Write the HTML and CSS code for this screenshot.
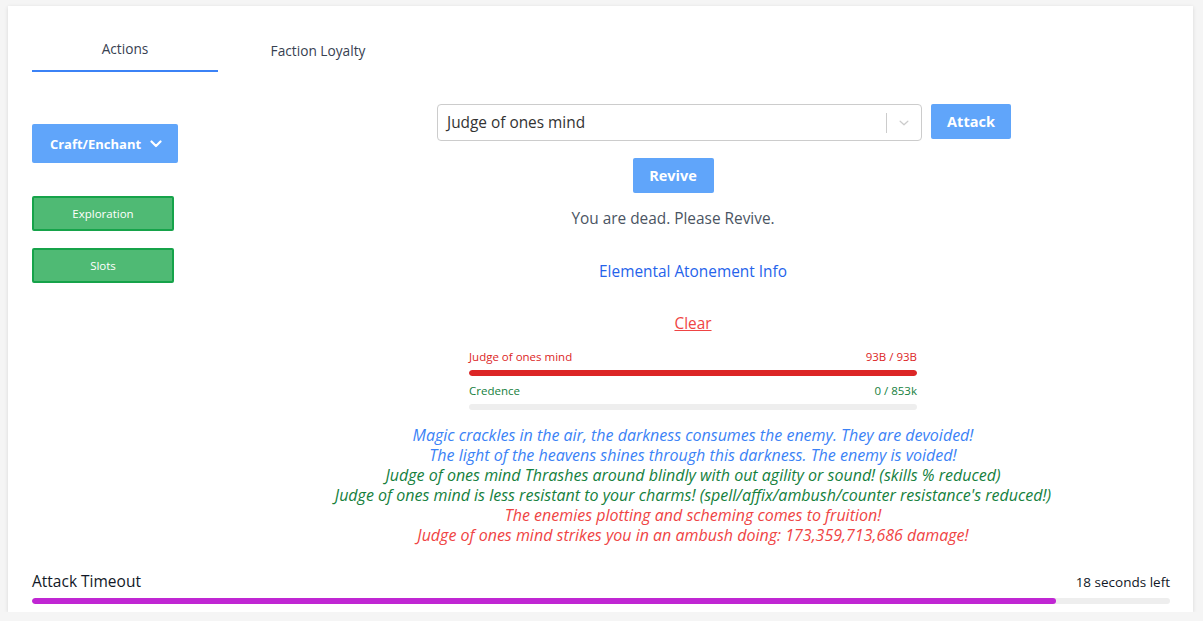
FILE: index.html
```html
<!DOCTYPE html>
<html>
<head>
<meta charset="utf-8">
<link rel="stylesheet" href="styles.css">
</head>
<body>
<div class="card">
  <div class="tabs">
    <div class="tab active">Actions</div>
    <div class="tab second">Faction Loyalty</div>
  </div>
  <div class="body">
    <div class="side">
      <button class="craft">Craft/Enchant
        <svg class="chev" width="12" height="8" viewBox="0 0 12 8"><path d="M1.5 1.5 L6 6 L10.5 1.5" fill="none" stroke="#fff" stroke-width="2.2" stroke-linecap="round" stroke-linejoin="round"/></svg>
      </button>
      <button class="green first">Exploration</button>
      <button class="green">Slots</button>
    </div>
    <div class="main">
      <div class="selrow">
        <div class="select">
          <span class="selval">Judge of ones mind</span>
          <span class="sep"></span>
          <svg class="selchev" width="14" height="14" viewBox="0 0 20 20"><path d="M4.5 7.5 L10 12.5 L15.5 7.5" fill="none" stroke="#ccc" stroke-width="1.8" stroke-linecap="round" stroke-linejoin="round"/></svg>
        </div>
        <button class="blue attack">Attack</button>
      </div>
      <div class="revive-block">
        <button class="blue revive">Revive</button>
        <div class="dead">You are dead. Please Revive.</div>
      </div>
      <div class="info">Elemental Atonement Info</div>
      <div class="clear">Clear</div>
      <div class="bars">
        <div class="barlabel red"><span>Judge of ones mind</span><span>93B / 93B</span></div>
        <div class="track"><div class="fill redfill" style="width:100%"></div></div>
        <div class="barlabel green-t"><span>Credence</span><span>0 / 853k</span></div>
        <div class="track"><div class="fill" style="width:0%"></div></div>
      </div>
      <div class="log">
        <div class="l-blue">Magic crackles in the air, the darkness consumes the enemy. They are devoided!</div>
        <div class="l-blue">The light of the heavens shines through this darkness. The enemy is voided!</div>
        <div class="l-green">Judge of ones mind Thrashes around blindly with out agility or sound! (skills % reduced)</div>
        <div class="l-green">Judge of ones mind is less resistant to your charms! (spell/affix/ambush/counter resistance's reduced!)</div>
        <div class="l-red">The enemies plotting and scheming comes to fruition!</div>
        <div class="l-red">Judge of ones mind strikes you in an ambush doing: 173,359,713,686 damage!</div>
      </div>
    </div>
  </div>
  <div class="timeout">
    <div class="tlabel"><span>Attack Timeout</span><span class="tleft">18 seconds left</span></div>
    <div class="ttrack"><div class="tfill" style="width:90%"></div></div>
  </div>
</div>
</body>
</html>
```
FILE: styles.css
```css
* { box-sizing: border-box; }
html, body { margin: 0; padding: 0; }
body {
  background: #f5f5f5;
  font-family: "Open Sans", "Noto Sans", sans-serif;
  color: #374151;
  padding: 6px 10px 0 8px;
}
.card {
  background: #fff;
  box-shadow: 0 1px 4px rgba(0,0,0,0.12);
  height: 606px;
  padding: 0 23px 0 24px;
  display: flex;
  flex-direction: column;
}
.tabs {
  display: flex;
  padding-top: 33px;
}
.tab {
  width: 186px;
  text-align: center;
  font-size: 13.7px;
  color: #374151;
  height: 33px;
}
.tab.active {
  border-bottom: 2px solid #3b82f6;
  padding-top: 0;
}
.tab.second {
  width: 200px;
  padding-top: 2px;
}
.body {
  display: flex;
  padding-top: 32px;
  flex: 1;
}
.side {
  width: 184px;
  display: flex;
  flex-direction: column;
  align-items: flex-start;
  padding-top: 20px;
}
button {
  font-family: inherit;
  border: none;
  cursor: pointer;
  color: #fff;
}
.craft {
  background: #60a5fa;
  width: 146px;
  height: 39px;
  border-radius: 2px;
  font-size: 13px;
  font-weight: 700;
  display: flex;
  align-items: center;
  justify-content: center;
  gap: 9px;
  padding: 0 0 0 2px;
}
.green {
  background: #4fba74;
  border: 2px solid #16a34a;
  width: 142px;
  height: 35px;
  border-radius: 2px;
  font-size: 11.5px;
  margin-top: 17px;
}
.green.first { margin-top: 33px; }
.main {
  flex: 1;
  display: flex;
  flex-direction: column;
  align-items: center;
}
.selrow {
  display: flex;
  gap: 9px;
  padding-left: 62px;
}
.select {
  width: 485px;
  height: 37px;
  border: 1px solid #ccc;
  border-radius: 4px;
  display: flex;
  align-items: center;
  padding-left: 9px;
  font-size: 15.4px;
  color: #333;
}
.selval { flex: 1; }
.sep {
  width: 1px;
  height: 20px;
  background: #ccc;
}
.selchev { margin: 0 10px 0 10px; }
.blue {
  background: #60a5fa;
  border-radius: 2px;
  font-size: 14.5px;
  font-weight: 700;
  height: 35px;
}
.attack { width: 80px; }
.revive-block {
  display: flex;
  flex-direction: column;
  align-items: center;
  padding-right: 40px;
  margin-top: 17px;
}
.revive { width: 81px; }
.dead {
  font-size: 15.4px;
  color: #4b5563;
  margin-top: 16px;
  line-height: 20px;
}
.info {
  color: #2563eb;
  font-size: 15.4px;
  margin-top: 33px;
  line-height: 20px;
}
.clear {
  color: #ef4444;
  text-decoration: underline;
  font-size: 15.4px;
  margin-top: 32px;
  line-height: 20px;
}
.bars {
  width: 448px;
  margin-top: 16px;
}
.barlabel {
  display: flex;
  justify-content: space-between;
  font-size: 11.5px;
  line-height: 14px;
}
.red { color: #dc2626; }
.green-t { color: #15803d; margin-top: 8px; }
.track {
  height: 6px;
  background: #eeeeee;
  border-radius: 3px;
  margin-top: 6px;
  overflow: hidden;
}
.fill { height: 100%; border-radius: 3px; }
.redfill { background: #dc2626; }
.log {
  margin-top: 15px;
  text-align: center;
  font-style: italic;
  font-size: 16px;
  line-height: 20px;
}
.l-blue { color: #3b82f6; }
.l-green { color: #15803d; }
.l-red { color: #ef4444; }
.timeout {
  padding-bottom: 8px;
}
.tlabel {
  display: flex;
  justify-content: space-between;
  align-items: baseline;
  font-size: 15.5px;
  color: #111827;
  line-height: 20px;
}
.tleft { font-size: 13.5px; }
.ttrack {
  height: 6px;
  background: #eeeeee;
  border-radius: 3px;
  margin-top: 6px;
  overflow: hidden;
}
.tfill {
  height: 100%;
  background: #c026d3;
  border-radius: 3px;
}
```
